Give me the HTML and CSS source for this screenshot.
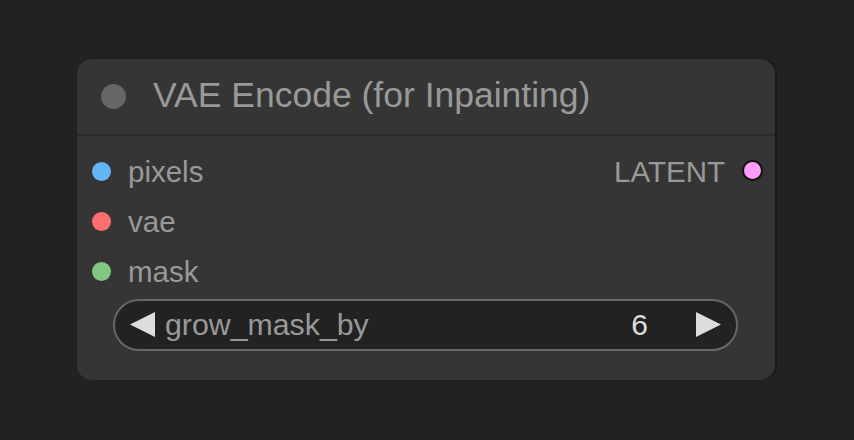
FILE: index.html
```html
<!DOCTYPE html>
<html>
<head>
<meta charset="utf-8">
<link rel="stylesheet" href="styles.css">
</head>
<body>
<div class="node">
  <div class="title">
    <span class="title-dot"></span>
    <span class="title-text">VAE Encode (for Inpainting)</span>
  </div>
  <div class="body">
    <div class="row">
      <div class="slot in"><span class="dot blue"></span><span class="label">pixels</span></div>
      <div class="slot out"><span class="label">LATENT</span><span class="dot pink"></span></div>
    </div>
    <div class="row">
      <div class="slot in"><span class="dot red"></span><span class="label">vae</span></div>
    </div>
    <div class="row">
      <div class="slot in"><span class="dot green"></span><span class="label">mask</span></div>
    </div>
    <div class="widget">
      <svg class="arrow" width="26" height="26" viewBox="0 0 26 26"><polygon points="25,0 25,25 0,12.5" fill="#dddddd"/></svg>
      <span class="wname">grow_mask_by</span>
      <span class="wvalue">6</span>
      <svg class="arrow" width="26" height="26" viewBox="0 0 26 26"><polygon points="0,0 0,25 25,12.5" fill="#dddddd"/></svg>
    </div>
  </div>
</div>
</body>
</html>
```

FILE: styles.css
```css
html, body {
  margin: 0;
  padding: 0;
  background: #222222;
  width: 854px;
  height: 440px;
  overflow: hidden;
  font-family: "Liberation Sans", Arial, sans-serif;
}
body {
  padding: 59px 0 0 77px;
  box-sizing: border-box;
}
.node {
  width: 698px;
  height: 321px;
  background: #353535;
  border-radius: 15px;
  box-shadow: 2px 0 0 rgba(0,0,0,0.25);
  overflow: hidden;
}
.title {
  display: flex;
  align-items: center;
  padding-left: 24px;
  border-bottom: 2px solid #2b2b2b;
  box-sizing: border-box;
  height: 77px;
}
.title-dot {
  width: 25px;
  height: 25px;
  border-radius: 50%;
  background: #666666;
  flex: none;
}
.title-text {
  margin-left: 27px;
  color: #999999;
  font-size: 35.5px;
  white-space: nowrap;
  position: relative;
  top: -1px;
}
.body {
  padding: 10px 0 0 0;
}
.row {
  height: 50px;
  display: flex;
  align-items: center;
  justify-content: space-between;
}
.slot {
  display: flex;
  align-items: center;
}
.slot.in {
  padding-left: 15px;
}
.slot.out {
  padding-right: 12px;
}
.label {
  color: #999999;
  font-size: 29.5px;
  line-height: 1;
  position: relative;
  top: 1px;
}
.slot.in .label {
  margin-left: 17px;
}
.slot.out .label {
  margin-right: 17px;
}
.dot {
  width: 19px;
  height: 19px;
  border-radius: 50%;
  flex: none;
}
.blue { background: #64b5f6; }
.red { background: #ff6e6e; }
.green { background: #81c784; }
.pink {
  width: 17px;
  height: 17px;
  background: #ff9cf9;
  border: 2px solid #111111;
  position: relative;
  top: -1px;
}
.widget {
  margin: 3px 37px 0 36px;
  height: 52px;
  box-sizing: border-box;
  border: 2px solid #666666;
  border-radius: 26px;
  background: #222222;
  display: flex;
  align-items: center;
  padding: 0 14px 0 15px;
}
.arrow {
  flex: none;
  display: block;
}
.wname {
  margin-left: 9px;
  color: #999999;
  font-size: 30.3px;
  flex: 1;
}
.wvalue {
  color: #dddddd;
  font-size: 30px;
  margin-right: 48px;
}
```
